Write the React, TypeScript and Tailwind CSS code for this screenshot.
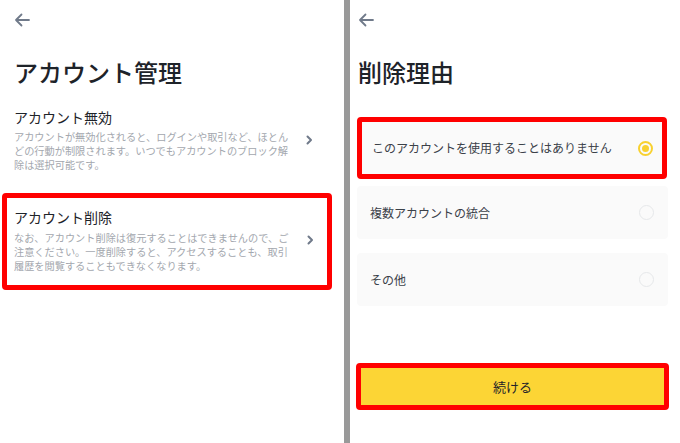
import React from "react";

const font = { fontFamily: '"Noto Sans CJK JP", "Noto Sans", sans-serif' };

const BackArrow = () => (
  <svg width="16" height="16" viewBox="0 0 16 16" fill="none">
    <path d="M15 8H2M7.5 2.5L2 8l5.5 5.5" stroke="#707a8a" strokeWidth="1.8" strokeLinecap="round" strokeLinejoin="round" />
  </svg>
);

const Chevron = () => (
  <svg width="7" height="10" viewBox="0 0 7 10" fill="none">
    <path d="M1.5 1.5L5 5l-3.5 3.5" stroke="#707a8a" strokeWidth="2" strokeLinecap="round" strokeLinejoin="round" />
  </svg>
);

const Radio = ({ checked }: { checked?: boolean }) =>
  checked ? (
    <div className="w-[15px] h-[15px] rounded-full border-2 border-[#f8d12f] flex items-center justify-center">
      <div className="w-[7px] h-[7px] rounded-full bg-[#f8d12f]" />
    </div>
  ) : (
    <div className="w-[15px] h-[15px] rounded-full border-[1.5px] border-[#e6e8ea]" />
  );

const App: React.FC = () => {
  return (
    <div className="flex w-[680px] h-[443px] bg-white overflow-hidden text-[#1e2329]" style={font}>
      {/* left: account management */}
      <div className="w-[344px] shrink-0 flex flex-col">
        <div className="mt-[12px] ml-[14px]">
          <BackArrow />
        </div>
        <h1 className="mt-[28px] ml-[14px] text-[24px] leading-[32px] font-medium">アカウント管理</h1>

        <div className="mt-[19px] ml-[14px] flex items-center">
          <div className="w-[280px]">
            <div className="text-[14px] leading-[20px]">アカウント無効</div>
            <p className="mt-[3px] text-[10.2px] leading-[14px] text-[#a3a7ae]">
              アカウントが無効化されると、ログインや取引など、ほとんどの行動が制限されます。いつでもアカウントのブロック解除は選択可能です。
            </p>
          </div>
          <div className="ml-[12px]">
            <Chevron />
          </div>
        </div>

        <div className="mt-[21px] ml-[2px] w-[330px] border-[5px] border-[#ff0000] rounded-[4px] pl-[7px] pt-[9px] pb-[12px] flex items-center">
          <div className="w-[280px]">
            <div className="text-[14px] leading-[20px]">アカウント削除</div>
            <p className="mt-[4px] text-[10.2px] leading-[14px] text-[#a3a7ae]">
              なお、アカウント削除は復元することはできませんので、ご注意ください。一度削除すると、アクセスすることも、取引履歴を閲覧することもできなくなります。
            </p>
          </div>
          <div className="ml-[13px]">
            <Chevron />
          </div>
        </div>
      </div>

      {/* divider */}
      <div className="w-[6px] shrink-0 bg-[#999999]" />

      {/* right: reason */}
      <div className="flex-1 flex flex-col pl-[7px]">
        <div className="mt-[12px] ml-[1px]">
          <BackArrow />
        </div>
        <h1 className="mt-[28px] ml-[1px] text-[24px] leading-[32px] font-medium">削除理由</h1>

        <div className="mt-[29px] w-[310px] h-[62px] border-[5px] border-[#ff0000] rounded-[4px] bg-[#fafafa] flex items-center justify-between pl-[10px] pr-[9px]">
          <span className="text-[12px] text-[#3b4149]">このアカウントを使用することはありません</span>
          <Radio checked />
        </div>

        <div className="mt-[7px] w-[311px] h-[53px] rounded-[4px] bg-[#fafafa] flex items-center justify-between pl-[13px] pr-[14px]">
          <span className="text-[12px] text-[#3b4149]">複数アカウントの統合</span>
          <Radio />
        </div>

        <div className="mt-[14px] w-[311px] h-[53px] rounded-[4px] bg-[#fafafa] flex items-center justify-between pl-[13px] pr-[14px]">
          <span className="text-[12px] text-[#3b4149]">その他</span>
          <Radio />
        </div>

        <button className="mt-[57px] -ml-[1px] w-[313px] h-[47px] border-[5px] border-[#ff0000] rounded-[4px] bg-[#fcd535] text-[13px] text-[#1e2329] flex items-center justify-center">
          続ける
        </button>
      </div>
    </div>
  );
};

export default App;
